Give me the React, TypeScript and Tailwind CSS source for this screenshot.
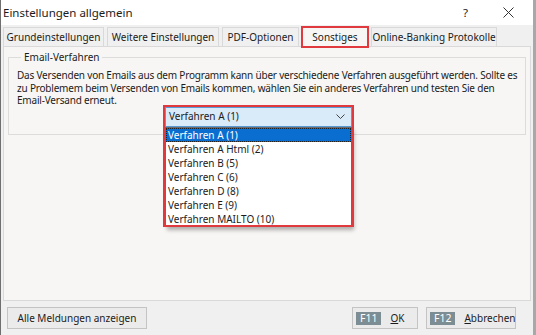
import React from "react";

const items = [
  "Verfahren A (1)",
  "Verfahren A Html (2)",
  "Verfahren B (5)",
  "Verfahren C (6)",
  "Verfahren D (8)",
  "Verfahren E (9)",
  "Verfahren MAILTO (10)",
];

function Tab({ label, w, selected }: { label: string; w: string; selected?: boolean }) {
  if (selected) {
    return (
      <div className={`relative h-[21px] -mb-px z-10 flex items-center justify-center whitespace-nowrap bg-[#f7f6f4] border-x border-[#d9d9d9] border-t-2 border-t-[#2f6fb5] ${w}`}>
        {label}
        <span className="absolute -left-[2px] -right-[2px] -top-[2px] bottom-[-1px] border-2 border-[#e0393e] pointer-events-none" />
      </div>
    );
  }
  return (
    <div className={`h-[19px] flex items-center justify-center whitespace-nowrap bg-[#f0f0f0] border-x border-t border-[#d9d9d9] ${w}`}>
      {label}
    </div>
  );
}

export default function App() {
  return (
    <div
      className="w-[536px] h-[335px] bg-[#f0f0f0] flex flex-col text-[#1b1b1b] text-[10px] border-l border-[#6f6f6f] border-r-[3px] border-r-[#a8a8a8] overflow-hidden"
      style={{ fontFamily: '"Noto Sans", "Open Sans", sans-serif' }}
    >
      {/* Title bar */}
      <div className="h-[25px] bg-white flex items-center pl-[2px] shrink-0">
        <span className="text-[11.5px]">Einstellungen allgemein</span>
        <span className="ml-auto mr-[35px] text-[11.5px]">?</span>
        <svg width="11" height="11" viewBox="0 0 11 11" className="mr-[19px]">
          <path d="M0.5 0.5 L10.5 10.5 M10.5 0.5 L0.5 10.5" stroke="#333" strokeWidth="1" />
        </svg>
      </div>

      {/* Tabs */}
      <div className="h-[21px] flex items-end gap-[3px] pl-[2px] shrink-0">
        <Tab label="Grundeinstellungen" w="w-[101px]" />
        <Tab label="Weitere Einstellungen" w="w-[112px]" />
        <Tab label="PDF-Optionen" w="w-[77px]" />
        <Tab label="Sonstiges" w="w-[66px]" selected />
        <Tab label="Online-Banking Protokolle" w="w-[126px]" />
      </div>

      {/* Panel */}
      <div className="h-[255px] ml-[2px] mr-[2px] border border-[#d9d9d9] bg-[#f7f6f4] shrink-0 pt-[4px] px-[4px]">
        <fieldset className="border border-[#dcdcdc] h-[84px] px-[8px]">
          <legend className="ml-[4px] px-[3px] leading-[13px]">Email-Verfahren</legend>
          <p className="leading-[12.5px] mt-[5px] tracking-[-0.2px] whitespace-nowrap">
            Das Versenden von Emails aus dem Programm kann über verschiedene Verfahren ausgeführt werden. Sollte es
            <br />
            zu Problemem beim Versenden von Emails kommen, wählen Sie ein anderes Verfahren und testen Sie den
            <br />
            Email-Versand erneut.
          </p>
          <div className="relative w-[187px] ml-[148px] mt-0 z-10">
            <div className="h-[20px] border border-[#5a9bd8] bg-[#d9eaf8] flex items-center pl-[3px] pr-[6px]">
              <span>Verfahren A (1)</span>
              <svg width="9" height="5" viewBox="0 0 9 5" className="ml-auto">
                <path d="M0.5 0.5 L4.5 4.5 L8.5 0.5" stroke="#444" fill="none" strokeWidth="1" />
              </svg>
            </div>
            <div className="absolute left-0 top-[20px] w-[187px] bg-white border border-[#6b6b6b] shadow-[2px_3px_4px_rgba(0,0,0,0.3)]">
              {items.map((it, i) => (
                <div
                  key={it}
                  className={
                    i === 0
                      ? "h-[14px] leading-[14px] pl-[2px] bg-[#0a6ed1] text-white outline-1 outline-dotted outline-[#222] -outline-offset-1"
                      : "h-[14px] leading-[14px] pl-[2px]"
                  }
                >
                  {it}
                </div>
              ))}
            </div>
            <span className="absolute -left-[2px] -top-[2px] w-[191px] h-[122px] border-2 border-[#e0393e] pointer-events-none" />
          </div>
        </fieldset>
      </div>

      {/* Bottom bar */}
      <div className="flex-1 flex items-start pt-[6px] pl-[6px] pr-[17px]">
        <button className="h-[22px] w-[140px] bg-[#ebebeb] border border-[#c4c4c4]">
          Alle Meldungen anzeigen
        </button>
        <button className="ml-auto h-[22px] w-[66px] bg-[#ebebeb] border border-[#c4c4c4] flex items-center pl-[3px] gap-[9px]">
          <span className="bg-[#7c8d93] text-white px-[4px] h-[13px] leading-[13px] text-[10.5px]">F11</span>
          <span>
            <span className="underline">O</span>K
          </span>
        </button>
        <button className="ml-[8px] h-[22px] w-[90px] bg-[#ebebeb] border border-[#c4c4c4] flex items-center pl-[3px] gap-[9px]">
          <span className="bg-[#7c8d93] text-white px-[4px] h-[13px] leading-[13px] text-[10.5px]">F12</span>
          <span>
            <span className="underline">A</span>bbrechen
          </span>
        </button>
      </div>
    </div>
  );
}
